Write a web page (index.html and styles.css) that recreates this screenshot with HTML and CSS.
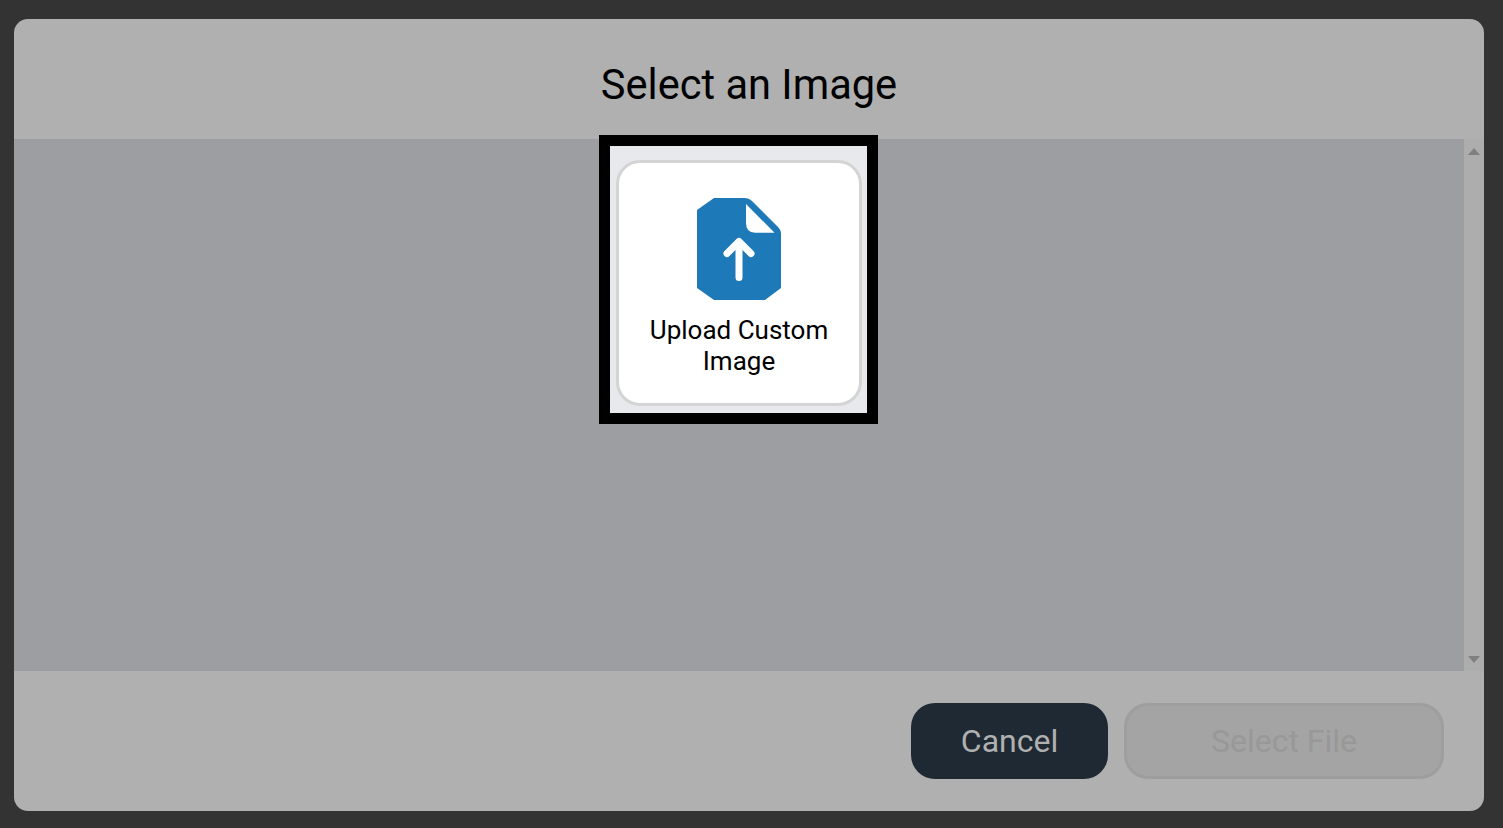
FILE: index.html
```html
<!DOCTYPE html>
<html lang="en">
<head>
<meta charset="utf-8">
<title>Select an Image</title>
<link rel="stylesheet" href="styles.css">
</head>
<body>
<main class="dialog">
  <header class="dialog-header">
    <h1 class="dialog-title">Select an Image</h1>
  </header>
  <section class="dialog-body">
    <div class="list">
      <div class="list-item">
        <button class="card" type="button">
          <svg class="card-icon" viewBox="0 0 84 102" width="84" height="102" aria-hidden="true">
            <path class="icon-file" d="M0 12 L17 0 H48 Q52 0 55 3 L81 29 Q84 32 84 35 V90 L68 102 H17 L0 90 Z"/>
            <path class="icon-fold" d="M49 6 L77.5 34.7 H58 Q49 34.7 49 25.3 Z"/>
            <path class="icon-arrow" d="M42 79.5 V43.5 M30 55.5 L42 43.5 L54 55.5"/>
          </svg>
          <span class="card-label">Upload Custom Image</span>
        </button>
      </div>
    </div>
    <div class="scrollbar" aria-hidden="true">
      <span class="arrow arrow-up"></span>
      <span class="arrow arrow-down"></span>
    </div>
  </section>
  <footer class="dialog-footer">
    <button class="btn btn-cancel" type="button">Cancel</button>
    <button class="btn btn-select" type="button" disabled>Select File</button>
  </footer>
</main>
</body>
</html>
```
FILE: styles.css
```css
* {
  box-sizing: border-box;
}

html,
body {
  margin: 0;
  height: 100%;
}

body {
  background: #333333;
  padding: 19px 19px 17px 14px;
  font-family: Roboto, "Liberation Sans", sans-serif;
  overflow: hidden;
}

.dialog {
  height: 100%;
  display: flex;
  flex-direction: column;
  background: #b0b0b0;
  border-radius: 14px;
  overflow: hidden;
}

.dialog-header {
  flex: 0 0 120px;
  display: flex;
  align-items: center;
  justify-content: center;
  padding-top: 12px;
}

.dialog-title {
  margin: 0;
  font-size: 41.6px;
  font-weight: 400;
  line-height: 48px;
  color: #000000;
}

.dialog-body {
  flex: 1 1 auto;
  display: flex;
  min-height: 0;
}

.list {
  flex: 1 1 auto;
  background: #9d9ea2;
  display: flex;
  justify-content: center;
  align-items: flex-start;
  padding: 7px 1px 0 0;
}

.list-item {
  width: 257px;
  height: 267px;
  padding: 14px 5px 7px 6px;
  background: #e8e9ed;
  outline: 11px solid #000000;
}

.card {
  width: 100%;
  height: 100%;
  padding: 35px 20px 0;
  display: flex;
  flex-direction: column;
  align-items: center;
  background: #ffffff;
  border: 3px solid #d4d4d4;
  border-radius: 24px;
  font: inherit;
}

.card-icon {
  display: block;
  flex: none;
}

.card-label {
  margin-top: 15px;
  font-size: 26px;
  line-height: 31px;
  color: #000000;
  text-align: center;
}

.icon-file {
  fill: #1d79b7;
}

.icon-fold {
  fill: #ffffff;
}

.icon-arrow {
  fill: none;
  stroke: #ffffff;
  stroke-width: 7;
  stroke-linecap: round;
  stroke-linejoin: round;
}

.scrollbar {
  flex: 0 0 20px;
  display: flex;
  flex-direction: column;
  justify-content: space-between;
  align-items: center;
  padding: 9px 0 8px;
  background: #adadad;
}

.arrow {
  width: 0;
  height: 0;
  border-left: 6px solid transparent;
  border-right: 6px solid transparent;
}

.arrow-up {
  border-bottom: 7px solid #808080;
}

.arrow-down {
  border-top: 7px solid #808080;
}

.dialog-footer {
  flex: 0 0 140px;
  display: flex;
  justify-content: flex-end;
  gap: 16px;
  padding: 32px 40px;
}

.btn {
  height: 76px;
  border-radius: 24px;
  font-family: inherit;
  font-size: 32px;
  font-weight: 400;
  padding: 0;
}

.btn-cancel {
  width: 197px;
  background: #1f2933;
  border: 0;
  color: #b0b0b0;
}

.btn-select {
  width: 320px;
  background: #a4a4a4;
  border: 3px solid #9e9e9e;
  color: #989898;
}
```
